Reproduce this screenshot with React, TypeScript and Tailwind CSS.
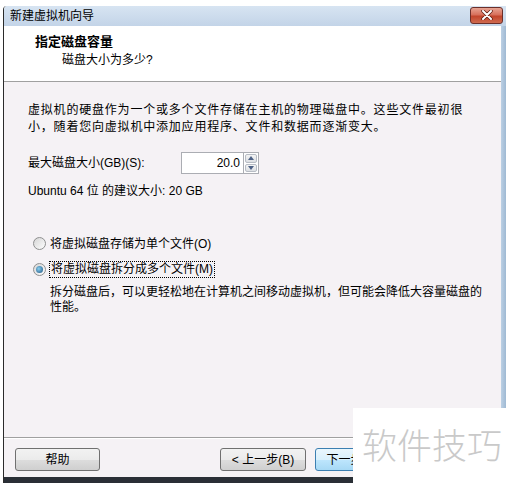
import React from "react";

const font = "font-['Liberation_Sans','Noto_Sans_CJK_SC',sans-serif]";

function Btn({ children, primary = false, className = "" }: { children: React.ReactNode; primary?: boolean; className?: string }) {
  return (
    <div
      className={`h-[23px] flex items-center justify-center rounded-[3px] border text-[12px] text-black whitespace-nowrap ${
        primary
          ? "border-[#3c7fb1] bg-[linear-gradient(#eaf6fd_0%,#d9f0fc_50%,#bee6fd_51%,#a7d9f5_100%)]"
          : "border-[#707070] bg-[linear-gradient(#f2f2f2_0%,#ebebeb_50%,#dddddd_51%,#cfcfcf_100%)]"
      } ${className}`}
    >
      {children}
    </div>
  );
}

function Radio({ checked }: { checked?: boolean }) {
  return (
    <div className="w-[13px] h-[13px] rounded-full border border-[#8e8f8f] bg-[linear-gradient(135deg,#d6d6d6,#fdfdfd)] flex items-center justify-center">
      {checked && <div className="w-[7px] h-[7px] rounded-full bg-[radial-gradient(circle_at_40%_40%,#8ad0f0,#1c5180)]" />}
    </div>
  );
}

export default function App() {
  return (
    <div className={`w-[506px] h-[483px] relative overflow-hidden bg-white ${font}`}>
      <div className="flex h-full pt-[6px]">
        <div className="w-[3px]" />
        <div className="flex-1 flex flex-col border-l border-[#2b2b2b] rounded-tl-[4px] overflow-hidden">
          {/* title bar */}
          <div className="h-[20px] flex items-center justify-between bg-[linear-gradient(#d7e4f2,#c3d4e8)] pl-[6px] pr-[3px]">
            <span className="text-[12px] text-black leading-none">新建虚拟机向导</span>
            <div className="w-[33px] h-[17px] -mt-[2px] rounded-[3px] border border-[#6b2f2a] bg-[linear-gradient(#e8a493_0%,#d7705c_45%,#c2452c_55%,#cf6a4f_100%)] flex items-center justify-center">
              <svg width="12" height="10" viewBox="0 0 12 10">
                <path d="M2 1 L10 9 M10 1 L2 9" stroke="#5a1a10" strokeWidth="3.4" strokeLinecap="round" />
                <path d="M2 1 L10 9 M10 1 L2 9" stroke="#ffffff" strokeWidth="2" strokeLinecap="round" />
              </svg>
            </div>
          </div>
          <div className="flex-1 flex">
            <div className="flex-1 flex flex-col">
              {/* header */}
              <div className="h-[56px] bg-white border-b border-[#a0a0a0] pl-[31px] pt-[8px]">
                <div className="text-[13px] font-bold text-black leading-[16px]">指定磁盘容量</div>
                <div className="text-[12px] text-black leading-[16px] pl-[27px] mt-[2px]">磁盘大小为多少?</div>
              </div>
              {/* content */}
              <div className="flex-1 bg-[#f5f2f5] pl-[24px] pr-[4px] pt-[20px] text-[12px] text-black whitespace-nowrap">
                <div className="leading-[17px] tracking-[0.8px]">
                  虚拟机的硬盘作为一个或多个文件存储在主机的物理磁盘中。这些文件最初很
                  <br />
                  小，随着您向虚拟机中添加应用程序、文件和数据而逐渐变大。
                </div>
                <div className="flex items-center mt-[16px] h-[22px]">
                  <span className="w-[153px]">最大磁盘大小(GB)(S):</span>
                  <div className="flex h-[22px]">
                    <div className="w-[63px] h-[22px] border border-[#abadb3] bg-white flex items-center justify-end pr-[3px]">20.0</div>
                    <div className="w-[15px] h-[22px] flex flex-col border border-l-0 border-[#abadb3] bg-white p-[1px] gap-[1px]">
                      <div className="flex-1 border border-[#b7bcc4] rounded-[2px] bg-[linear-gradient(#f4f4f4,#dcdfe3)] flex items-center justify-center">
                        <svg width="6" height="4" viewBox="0 0 6 4"><path d="M0 4 L3 0 L6 4Z" fill="#4d6185" /></svg>
                      </div>
                      <div className="flex-1 border border-[#b7bcc4] rounded-[2px] bg-[linear-gradient(#f4f4f4,#dcdfe3)] flex items-center justify-center">
                        <svg width="6" height="4" viewBox="0 0 6 4"><path d="M0 0 L3 4 L6 0Z" fill="#4d6185" /></svg>
                      </div>
                    </div>
                  </div>
                </div>
                <div className="mt-[9px] leading-[17px]">Ubuntu 64 位 的建议大小: 20 GB</div>
                <div className="mt-[35px] flex items-center gap-[4px] pl-[5px] h-[17px]">
                  <Radio />
                  <span>将虚拟磁盘存储为单个文件(O)</span>
                </div>
                <div className="mt-[9px] flex items-center gap-[3px] pl-[5px] h-[17px]">
                  <Radio checked />
                  <span className="border border-dotted border-black px-[1px] leading-[15px]">将虚拟磁盘拆分成多个文件(M)</span>
                </div>
                <div className="mt-[7px] pl-[22px] leading-[15px]">
                  拆分磁盘后，可以更轻松地在计算机之间移动虚拟机，但可能会降低大容量磁盘的
                  <br />
                  性能。
                </div>
              </div>
              {/* footer */}
              <div className="h-[40px] bg-[#f5f2f5] border-t border-[#a0a0a0] shadow-[inset_0_1px_0_#ffffff] flex items-start pt-[10px] pl-[11px]">
                <Btn className="w-[85px]">帮助</Btn>
                <Btn className="w-[86px] ml-[120px]">&lt; 上一步(B)</Btn>
                <Btn primary className="w-[86px] ml-[9px]">下一步(N) &gt;</Btn>
              </div>
            </div>
            <div className="w-[5px] bg-[linear-gradient(90deg,#bcd0e4,#9fb9d3)]" />
          </div>
          <div className="h-[6px] bg-[#2a2f36]" />
        </div>
      </div>
      {/* watermark */}
      <div className="absolute left-[353px] top-[408px] w-[153px] h-[75px] bg-white flex items-center pl-[9px] pb-[4px]">
        <span className="text-[35px] text-[#c9c9c9] leading-none whitespace-nowrap font-['Noto_Sans_CJK_SC',sans-serif] font-light">软件技巧</span>
      </div>
    </div>
  );
}
